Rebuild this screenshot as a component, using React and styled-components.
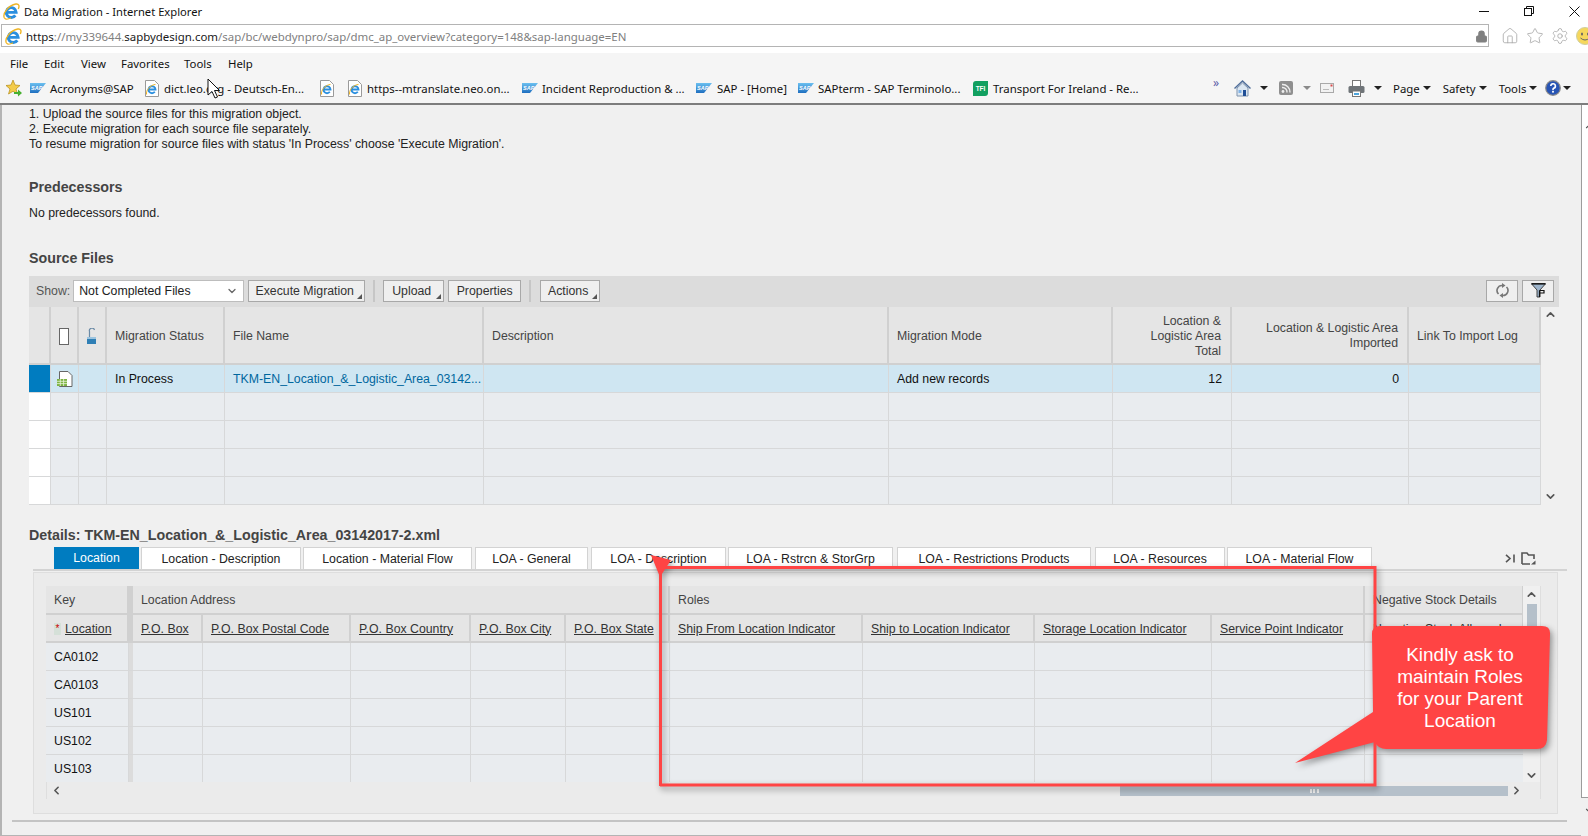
import React from 'react';
import styled, { createGlobalStyle } from 'styled-components';
import { Home, Star, Settings, Lock, ChevronUp, ChevronDown, ChevronLeft, ChevronRight } from 'lucide-react';

const GlobalStyle = createGlobalStyle`
  html, body {
    margin: 0;
    padding: 0;
    background: #fff;
    overflow: hidden;
  }
  * {
    box-sizing: border-box;
  }
`;

const Page = styled.div`
  position: relative;
  width: 1588px;
  height: 836px;
  overflow: hidden;
  background: #fff;
  font-family: "Liberation Sans", Arial, sans-serif;
  font-size: 12.3px;
  color: #333;
`;

/* ---------- browser chrome ---------- */

const TitleBar = styled.div`
  display: flex;
  align-items: center;
  height: 24px;
  padding: 0 0 2px 3px;
  font-family: "Noto Sans", sans-serif;
  font-size: 11.2px;
  color: #111;
  gap: 4px;
`;

const WindowControls = styled.div`
  margin-left: auto;
  display: flex;
  align-items: center;
  gap: 35px;
  padding-right: 8px;
`;

const AddressRow = styled.div`
  display: flex;
  align-items: center;
  width: 1588px;
  height: 23px;
`;

const AddressBox = styled.div`
  display: flex;
  align-items: center;
  flex: none;
  width: 1488px;
  height: 23px;
  margin-left: 1px;
  padding: 1px 0 0 3px;
  gap: 4px;
  border: 1px solid #b4b4b4;
  font-family: "Noto Sans", sans-serif;
  font-size: 11.45px;
  color: #808080;
  white-space: nowrap;
`;

const UrlDark = styled.span`
  color: #1a1a1a;
`;

const AddressIcons = styled.div`
  display: flex;
  align-items: center;
  flex: none;
  gap: 7px;
  margin-left: 12px;
  color: #a8a8a8;
`;

const ToolbarArea = styled.div`
  height: 52px;
  margin-top: 6px;
  background: #f5f5f5;
  border-bottom: 2px solid #7d7d7d;
  font-family: "Noto Sans", sans-serif;
  font-size: 11.4px;
  color: #111;
`;

const MenuRow = styled.div`
  display: flex;
  align-items: center;
  height: 21px;
`;

const MenuItem = styled.span`
  position: relative;
  width: ${p => p.$w}px;
  flex: none;
`;

const FavRow = styled.div`
  display: flex;
  align-items: center;
  height: 28px;
  padding-left: 5px;
  white-space: nowrap;
`;

const FavGap = styled.span`
  flex: none;
  width: ${p => p.$w}px;
`;

const FavText = styled.span`
  flex: none;
  width: ${p => p.$w}px;
`;

const Overflow = styled.span`
  flex: none;
  width: 21px;
  margin-top: -11px;
  color: #5c5ca8;
  font-size: 12px;
`;

const DropCaret = styled.span`
  flex: none;
  width: 0;
  height: 0;
  border-left: 4px solid transparent;
  border-right: 4px solid transparent;
  border-top: 4px solid ${p => p.$grey ? '#8a8a8a' : '#222'};
`;

/* ---------- page content ---------- */

const Main = styled.div`
  display: flex;
  height: 731px;
`;

const Content = styled.div`
  flex: none;
  width: 1581px;
  height: 731px;
  border-left: 2px solid #b4b4b4;
  border-bottom: 1px solid #b4b4b4;
  background: #f0f0f0;
  padding-top: 2px;
`;

const SideScroll = styled.div`
  flex: 1;
  display: flex;
  flex-direction: column;
  background: #f0f0f0;
  color: #555;
  overflow: hidden;
`;

const SideTrack = styled.div`
  height: 693px;
  padding: 14px 0 0 1px;
  background: #fff;
  border-left: 1px solid #9c9c9c;
  border-bottom: 1px solid #9c9c9c;
`;

const SideFoot = styled.div`
  padding: 6px 0 0 2px;
`;

const Indented = styled.div`
  margin-left: 27px;
`;

const InfoLine = styled.div`
  line-height: 15px;
  color: #222;
`;

const SectionTitle = styled.div`
  margin-top: ${p => p.$top}px;
  line-height: 20px;
  font-size: 14.25px;
  font-weight: bold;
  color: #444;
`;

const Toolbar = styled.div`
  display: flex;
  align-items: center;
  width: 1530px;
  height: 31px;
  margin-top: 8px;
  padding: 0 5px 2px 7px;
  background: #dcdcdc;
`;

const ShowLabel = styled.span`
  color: #555;
  margin-right: 3px;
`;

const SelectBox = styled.div`
  display: flex;
  align-items: center;
  justify-content: space-between;
  width: 171px;
  height: 22px;
  padding: 0 5px 0 5px;
  margin-right: 4px;
  background: #fff;
  border: 1px solid #bdbdbd;
  color: #222;
`;

const ToolButton = styled.div`
  position: relative;
  display: flex;
  align-items: center;
  justify-content: center;
  flex: none;
  width: ${p => p.$w}px;
  height: 22px;
  margin-left: ${p => p.$left || 0}px;
  background: #efefef;
  border: 1px solid #a8a8a8;
  color: #333;
  ${p => p.$menu && `
    padding-right: 4px;
    &::after {
      content: '';
      position: absolute;
      right: 2px;
      bottom: 2px;
      border-left: 5px solid transparent;
      border-bottom: 5px solid #555;
    }
  `}
`;

const ToolSep = styled.span`
  flex: none;
  width: 2px;
  height: 22px;
  margin-left: 8px;
  margin-right: 2px;
  background: #c6c6c6;
`;

const ToolSpacer = styled.span`
  flex: 1;
`;

const TableWrap = styled.div`
  display: flex;
  width: 1530px;
`;

const ScrollColumn = styled.div`
  flex: none;
  width: ${p => p.$w}px;
  display: flex;
  flex-direction: column;
  align-items: center;
  justify-content: space-between;
  padding: ${p => p.$pad};
  color: #555;
  background: #f0f0f0;
`;

const Grid = styled.div`
  display: grid;
  grid-template-columns: ${p => p.$cols};
`;

const Cell = styled.div`
  display: flex;
  align-items: center;
  min-width: 0;
  height: ${p => p.$h || 28}px;
  padding: ${p => p.$center ? '0' : p.$right ? '0 9px 0 8px' : '0 8px'};
  justify-content: ${p => p.$right ? 'flex-end' : p.$center ? 'center' : 'flex-start'};
  text-align: ${p => p.$right ? 'right' : 'left'};
  background: ${p => p.$bg || '#e9ecef'};
  border-right: 1px solid #d7d8d9;
  border-bottom: 1px solid #d7d8d9;
  color: ${p => p.$color || '#111'};
  white-space: nowrap;
  overflow: hidden;
`;

const HeadCell = styled(Cell)`
  padding-top: 2px;
  background: ${p => p.$bg || '#e5e5e5'};
  border-right: 2px solid #d0d0d0;
  border-bottom: 2px solid #d0d0d0;
  color: #444;
  line-height: 15px;
`;

const SpanHead = styled(HeadCell)`
  grid-column: ${p => p.$span};
`;

const FileLink = styled(Cell)`
  padding-right: 0;
`;

const CheckBox = styled.span`
  width: 10px;
  height: 17px;
  background: #fff;
  border: 1px solid #666;
`;

const TabBar = styled.div`
  display: flex;
  align-items: stretch;
  height: 24px;
  margin: 2px 0 0 31px;
  width: 1534px;
  padding-left: 21px;
  border-bottom: 2px solid #d3d3d3;
`;

const Tab = styled.div`
  display: flex;
  align-items: center;
  justify-content: center;
  flex: none;
  width: ${p => p.$w}px;
  margin-right: ${p => p.$gap}px;
  background: ${p => p.$active ? '#007cc0' : '#fff'};
  border: ${p => p.$active ? 'none' : '1px solid #d3d3d3'};
  border-bottom: none;
  color: ${p => p.$active ? '#fff' : '#222'};
`;

const TabTools = styled.div`
  margin-left: auto;
  display: flex;
  align-items: center;
  gap: 5px;
  padding-right: 31px;
  color: #555;
`;

const DetailPanel = styled.div`
  width: 1525px;
  height: 242px;
  margin: 1px 0 0 31px;
  padding: 13px 0 0 12px;
  background: #ebebeb;
  border: 1px solid #dedede;
`;

const DetailTable = styled.div`
  width: 1495px;
  height: 213px;
  border: 1px solid #dedede;
  border-width: 0 1px 1px 0;
`;

const DetailBody = styled.div`
  display: flex;
  height: 196px;
`;

const DetailScroll = styled.div`
  width: 1478px;
  overflow: hidden;
`;

const ThumbV = styled.div`
  width: 10px;
  flex: 1;
  margin: 3px 0;
  background: linear-gradient(#b5c0ca 0 60px, transparent 60px);
`;

const UnderHead = styled.span`
  text-decoration: underline;
  color: #333;
`;

const Required = styled.span`
  display: inline-flex;
  align-items: center;
  justify-content: center;
  width: 7px;
  height: 12px;
  margin-right: 4px;
  background: #d5e0d8;
  color: #c00;
  font-size: 10px;
  line-height: 12px;
`;

const HScroll = styled.div`
  display: flex;
  align-items: center;
  height: 17px;
  padding: 0 17px 0 3px;
  color: #555;
  background: #ebebeb;
  border-left: 1px solid #dedede;
`;

const HTrack = styled.div`
  flex: 1;
  display: flex;
  justify-content: flex-end;
  padding: 0 2px 0 0;
`;

const HThumb = styled.div`
  display: flex;
  align-items: center;
  justify-content: center;
  width: 388px;
  height: 10px;
  background: #b5c0ca;
`;

const Grip = styled.span`
  width: 9px;
  height: 4px;
  background: repeating-linear-gradient(90deg, #f0f0f0 0 2px, transparent 2px 3.5px);
`;

const BottomLine = styled.div`
  width: 1555px;
  height: 2px;
  margin: 6px 0 0 10px;
  background: #c4c4c4;
`;

/* ---------- annotation layer ---------- */

const Overlay = styled.svg`
  position: absolute;
  left: 0;
  top: 0;
  pointer-events: none;
  filter: drop-shadow(2px 3px 3px rgba(0, 0, 0, 0.4));
`;

const CalloutText = styled.div`
  position: absolute;
  left: 1372px;
  top: 644px;
  width: 176px;
  font-size: 19px;
  line-height: 22px;
  text-align: center;
  color: #fff;
`;

const Cursor = styled.svg`
  position: absolute;
  left: 207px;
  top: 78px;
`;

/* ---------- small drawings ---------- */

const IeIcon = ({ size = 17 }) => (
  <svg width={size} height={size} viewBox="0 0 20 20" style={{ flex: 'none' }}>
    <path d="M5.5 11 H15.5 A5.8 5.8 0 1 0 14.5 14.5" fill="none" stroke="#2b8fdf" strokeWidth="3.4" />
    <path d="M1.6 17.5 C-1 12 7 2.5 15 1.2 C19 .6 19.6 3.4 18 7" fill="none" stroke="#eeb424" strokeWidth="1.6" />
    <path d="M1.6 17.5 C3 19.6 6.5 19 9.5 17.4" fill="none" stroke="#eeb424" strokeWidth="1.2" />
  </svg>
);

const SapIcon = () => (
  <svg width="16" height="10" viewBox="0 0 16 10" style={{ flex: 'none' }}>
    <defs>
      <linearGradient id="sapBlue" x1="0" y1="0" x2="0" y2="1">
        <stop offset="0" stopColor="#6cc0f0" />
        <stop offset="1" stopColor="#1f6fc0" />
      </linearGradient>
    </defs>
    <path d="M0 0 H16 L8 10 H0 Z" fill="url(#sapBlue)" />
    <text x="1" y="6.8" fontSize="5.5" fontWeight="bold" fontStyle="italic" fill="#fff" fontFamily="Liberation Sans">SAP</text>
  </svg>
);

const PageIe = () => (
  <svg width="14" height="17" viewBox="0 0 14 17" style={{ flex: 'none' }}>
    <path d="M.5.5 H9.5 L13.5 4.5 V16.5 H.5 Z" fill="#fff" stroke="#9a9a9a" />
    <path d="M3.5 9.5 H10.5 A3.5 3.5 0 1 0 9.8 11.8" fill="none" stroke="#2b8fdf" strokeWidth="1.9" />
    <path d="M1.6 14.5 C.6 10.5 5 5 10.5 4.4" fill="none" stroke="#eeb424" strokeWidth="1" />
  </svg>
);

const TfiIcon = () => (
  <svg width="15" height="15" viewBox="0 0 15 15" style={{ flex: 'none' }}>
    <path d="M3 0 H15 V12 Q15 15 12 15 H0 V3 Q0 0 3 0 Z" fill="#12a060" />
    <text x="7.5" y="10" textAnchor="middle" fontSize="6.5" fontWeight="bold" fill="#fff" fontFamily="Liberation Sans">TFI</text>
  </svg>
);

const FavStar = () => (
  <svg width="18" height="18" viewBox="0 0 18 18" style={{ flex: 'none' }}>
    <path d="M8 1 L10 6 L15 6.5 L11 10 L12.5 15 L8 12.3 L3.5 15 L5 10 L1 6.5 L6 6 Z" fill="#f3cb4a" stroke="#b58b14" strokeWidth=".7" />
    <path d="M9 13 H13 V10.5 L17 14 L13 17.5 V15 H9 Z" fill="#47b02f" />
  </svg>
);

const SmileyIcon = () => (
  <svg width="18" height="18" viewBox="0 0 18 18" style={{ flex: 'none' }}>
    <circle cx="9" cy="9" r="8.5" fill="#f6d75c" stroke="#cfcfa0" />
    <ellipse cx="6" cy="7" rx="1" ry="1.6" fill="#666" />
    <ellipse cx="12" cy="7" rx="1" ry="1.6" fill="#666" />
    <path d="M4.5 11 Q9 15 13.5 11" fill="none" stroke="#666" />
  </svg>
);

const WinMin = () => <svg width="10" height="10"><path d="M0 5.5 H10" stroke="#111" /></svg>;
const WinRestore = () => (
  <svg width="10" height="10" fill="none" stroke="#111">
    <rect x=".5" y="2.5" width="7" height="7" />
    <path d="M2.5 2.5 V.5 H9.5 V7.5 H7.5" />
  </svg>
);
const WinClose = () => <svg width="11" height="11"><path d="M.5 .5 L10.5 10.5 M10.5 .5 L.5 10.5" stroke="#111" /></svg>;

const HomeColor = () => (
  <svg width="17" height="17" viewBox="0 0 17 17" style={{ flex: 'none' }}>
    <path d="M3 8 V16 H14 V8 L8.5 3 Z" fill="#dce7f2" stroke="#7e93ad" />
    <path d="M.5 8.5 L8.5 1 L16.5 8.5" fill="none" stroke="#4f6d9a" strokeWidth="1.4" />
    <rect x="9" y="10" width="3" height="6" fill="#1f4e96" />
    <rect x="4.5" y="10" width="3" height="3" fill="#7fb2e5" />
  </svg>
);

const RssIcon = () => (
  <svg width="14" height="14" viewBox="0 0 14 14" style={{ flex: 'none' }}>
    <rect width="14" height="14" rx="2" fill="#8f8f8f" />
    <circle cx="4" cy="10.5" r="1.4" fill="#eee" />
    <path d="M3 6.5 A4.5 4.5 0 0 1 8 11.5 M3 3.5 A7.5 7.5 0 0 1 11 11.5" fill="none" stroke="#eee" strokeWidth="1.4" />
  </svg>
);

const MailIcon = () => (
  <svg width="14" height="10" viewBox="0 0 14 10" style={{ flex: 'none' }}>
    <rect x=".5" y=".5" width="13" height="9" fill="#f2f2f2" stroke="#a9a9a9" />
    <rect x="10.5" y="1.5" width="2" height="2" fill="#d84a4a" />
    <path d="M3 6.5 H9" stroke="#bbb" />
  </svg>
);

const PrintIcon = () => (
  <svg width="17" height="17" viewBox="0 0 17 17" style={{ flex: 'none' }}>
    <rect x="4.5" y=".5" width="8" height="6" fill="#fff" stroke="#777" />
    <rect x=".5" y="6" width="16" height="7" rx="1.5" fill="#6f7478" />
    <rect x="4.5" y="11" width="8" height="5.5" fill="#fff" stroke="#777" />
    <rect x="6" y="13" width="5" height="2" fill="#4ea5dc" />
  </svg>
);

const HelpIcon = () => (
  <svg width="16" height="16" viewBox="0 0 16 16" style={{ flex: 'none' }}>
    <circle cx="8" cy="8" r="7.3" fill="#2754b4" stroke="#8b8b8b" strokeWidth="1.2" />
    <path d="M5.8 6 A2.3 2.3 0 1 1 8.6 8.3 Q8 8.6 8 10" fill="none" stroke="#fff" strokeWidth="1.6" />
    <rect x="7.1" y="10.8" width="1.8" height="1.8" fill="#fff" />
  </svg>
);

const LockOpen = () => (
  <svg width="10" height="17" viewBox="0 0 10 17" style={{ flex: 'none' }}>
    <path d="M2.5 9 V3.5 A2.5 2.5 0 0 1 7.5 2" fill="none" stroke="#6b8aa6" strokeWidth="1.2" />
    <rect x="0" y="9" width="9" height="7" fill="#2f7fb5" />
    <rect x="0" y="9" width="9" height="2" fill="#9cc4df" />
  </svg>
);

const FileIcon = () => (
  <svg width="16" height="16" viewBox="0 0 16 16" style={{ flex: 'none' }}>
    <path d="M2.5.5 H11 L15 4.5 V15.5 H2.5 Z" fill="#fff" stroke="#666" />
    <rect x="0" y="8" width="10" height="7" fill="#7cb342" />
    <path d="M0 10.3 H10 M0 12.6 H10 M3.3 8 V15 M6.6 8 V15" stroke="#e8f3da" strokeWidth=".8" />
  </svg>
);

const RefreshIcon = () => (
  <svg width="13" height="15" viewBox="0 0 13 15" style={{ flex: 'none' }}>
    <path d="M2.5 11 A5 5 0 0 1 6.5 2.5" fill="none" stroke="#777" strokeWidth="1.6" />
    <path d="M6 0 L9.5 2.6 L6 5 Z" fill="#777" />
    <path d="M10.5 4 A5 5 0 0 1 6.5 12.5" fill="none" stroke="#777" strokeWidth="1.6" />
    <path d="M7 10 L3.5 12.4 L7 15 Z" fill="#777" />
  </svg>
);

const FilterIcon = () => (
  <svg width="15" height="15" viewBox="0 0 15 15" style={{ flex: 'none' }}>
    <path d="M.5.8 H14.5 L9 7 V14 H6 V7 Z" fill="#9db4cb" stroke="#333" strokeWidth=".9" />
    <path d="M.5.8 H14.5" stroke="#111" strokeWidth="1.4" />
    <path d="M8.5 7.5 H13 V10 H8.5 M8.5 14 V7.5" fill="none" stroke="#111" strokeWidth="1.2" />
  </svg>
);

const FolderTool = () => (
  <svg width="15" height="13" viewBox="0 0 15 13">
    <path d="M1 12 V1 H6 L7.5 3 H13 V7 M1 12 H9" fill="none" stroke="#555" strokeWidth="1.6" />
    <path d="M10 12.5 L14.5 12.5 L14.5 8.5 Z" fill="#555" />
  </svg>
);

const LastIcon = () => (
  <svg width="11" height="9" viewBox="0 0 11 9">
    <path d="M1 .8 L5 4.5 L1 8.2 M9 .5 V8.5" fill="none" stroke="#555" strokeWidth="1.6" />
  </svg>
);

/* ---------- data ---------- */

const MENU = [['File', 34], ['Edit', 37], ['View', 40], ['Favorites', 63], ['Tools', 44], ['Help', 40]];

const SOURCE_COLS = '22px 28px 28px 118px 259px 405px 224px 119px 177px 132px';
const DETAIL_COLS = '83px 4px 70px 148px 120px 95px 104px 193px 172px 177px 153px 159px';

const DETAIL_HEADS = [
  'P.O. Box',
  'P.O. Box Postal Code',
  'P.O. Box Country',
  'P.O. Box City',
  'P.O. Box State',
  'Ship From Location Indicator',
  'Ship to Location Indicator',
  'Storage Location Indicator',
  'Service Point Indicator',
  'Negative Stock Allowed'
];

const LOCATIONS = ['CA0102', 'CA0103', 'US101', 'US102', 'US103'];

const TABS = [
  ['Location', 85, 2, true],
  ['Location - Description', 160, 2],
  ['Location - Material Flow', 169, 3],
  ['LOA - General', 113, 3],
  ['LOA - Description', 135, 2],
  ['LOA - Rstrcn & StorGrp', 165, 4],
  ['LOA - Restrictions Products', 194, 4],
  ['LOA - Resources', 130, 2],
  ['LOA - Material Flow', 145, 0]
];

const App = () => (
  <Page>
    <GlobalStyle />

    <TitleBar>
      <IeIcon />
      Data Migration - Internet Explorer
      <WindowControls>
        <WinMin />
        <WinRestore />
        <WinClose />
      </WindowControls>
    </TitleBar>

    <AddressRow>
      <AddressBox>
        <IeIcon />
        <span>
          <UrlDark>https</UrlDark>://my339644.<UrlDark>sapbydesign.com</UrlDark>/sap/bc/webdynpro/sap/dmc_ap_overview?category=148&amp;sap-language=EN
        </span>
        <Lock size={13} fill="#808080" color="#808080" style={{ marginLeft: 'auto' }} />
      </AddressBox>
      <AddressIcons>
        <Home size={18} strokeWidth={1.1} />
        <Star size={18} strokeWidth={1.1} />
        <Settings size={18} strokeWidth={1.1} />
        <SmileyIcon />
      </AddressIcons>
    </AddressRow>

    <ToolbarArea>
      <MenuRow>
        <FavGap $w={10} />
        {MENU.map(([label, w]) => <MenuItem key={label} $w={w}>{label}</MenuItem>)}
      </MenuRow>
      <FavRow>
        <FavStar />
        <FavGap $w={7} />
        <SapIcon />
        <FavGap $w={4} />
        <FavText $w={95}>Acronyms@SAP</FavText>
        <PageIe />
        <FavGap $w={5} />
        <FavText $w={156}>dict.leo.org - Deutsch-En...</FavText>
        <PageIe />
        <FavGap $w={14} />
        <PageIe />
        <FavGap $w={5} />
        <FavText $w={155}>https--mtranslate.neo.on...</FavText>
        <SapIcon />
        <FavGap $w={4} />
        <FavText $w={154}>Incident Reproduction &amp; ...</FavText>
        <SapIcon />
        <FavGap $w={5} />
        <FavText $w={81}>SAP - [Home]</FavText>
        <SapIcon />
        <FavGap $w={4} />
        <FavText $w={155}>SAPterm - SAP Terminolo...</FavText>
        <TfiIcon />
        <FavGap $w={5} />
        <FavText $w={220}>Transport For Ireland - Re...</FavText>
        <Overflow>»</Overflow>
        <HomeColor />
        <FavGap $w={9} />
        <DropCaret />
        <FavGap $w={11} />
        <RssIcon />
        <FavGap $w={10} />
        <DropCaret $grey />
        <FavGap $w={9} />
        <MailIcon />
        <FavGap $w={14} />
        <PrintIcon />
        <FavGap $w={9} />
        <DropCaret />
        <FavGap $w={11} />
        Page
        <FavGap $w={3} />
        <DropCaret />
        <FavGap $w={12} />
        Safety
        <FavGap $w={3} />
        <DropCaret />
        <FavGap $w={12} />
        Tools
        <FavGap $w={3} />
        <DropCaret />
        <FavGap $w={8} />
        <HelpIcon />
        <FavGap $w={2} />
        <DropCaret />
      </FavRow>
    </ToolbarArea>

    <Main>
      <Content>
        <Indented>
          <InfoLine>1. Upload the source files for this migration object.</InfoLine>
          <InfoLine>2. Execute migration for each source file separately.</InfoLine>
          <InfoLine>To resume migration for source files with status 'In Process' choose 'Execute Migration'.</InfoLine>
          <SectionTitle $top={25}>Predecessors</SectionTitle>
          <InfoLine style={{ marginTop: 9 }}>No predecessors found.</InfoLine>
          <SectionTitle $top={27}>Source Files</SectionTitle>

          <Toolbar>
            <ShowLabel>Show:</ShowLabel>
            <SelectBox>Not Completed Files <ChevronDown size={12} strokeWidth={2.5} color="#666" /></SelectBox>
            <ToolButton $w={117} $menu>Execute Migration</ToolButton>
            <ToolSep />
            <ToolButton $w={61} $left={6} $menu>Upload</ToolButton>
            <ToolButton $w={73} $left={4}>Properties</ToolButton>
            <ToolSep />
            <ToolButton $w={60} $left={7} $menu>Actions</ToolButton>
            <ToolSpacer />
            <ToolButton $w={32}><RefreshIcon /></ToolButton>
            <ToolButton $w={32} $left={4}><FilterIcon /></ToolButton>
          </Toolbar>

          <TableWrap>
            <Grid $cols={SOURCE_COLS}>
              <HeadCell $h={58} />
              <HeadCell $h={58} $center><CheckBox /></HeadCell>
              <HeadCell $h={58} $center><LockOpen /></HeadCell>
              <HeadCell $h={58}>Migration Status</HeadCell>
              <HeadCell $h={58}>File Name</HeadCell>
              <HeadCell $h={58}>Description</HeadCell>
              <HeadCell $h={58}>Migration Mode</HeadCell>
              <HeadCell $h={58} $right>Location &amp;<br />Logistic Area<br />Total</HeadCell>
              <HeadCell $h={58} $right>Location &amp; Logistic Area<br />Imported</HeadCell>
              <HeadCell $h={58}>Link To Import Log</HeadCell>

              <Cell $bg="#007cc0" />
              <Cell $bg="#cfe6f2" $center><FileIcon /></Cell>
              <Cell $bg="#cfe6f2" />
              <Cell $bg="#cfe6f2">In Process</Cell>
              <FileLink $bg="#cfe6f2" $color="#00679e">TKM-EN_Location_&amp;_Logistic_Area_03142...</FileLink>
              <Cell $bg="#cfe6f2" />
              <Cell $bg="#cfe6f2">Add new records</Cell>
              <Cell $bg="#cfe6f2" $right>12</Cell>
              <Cell $bg="#cfe6f2" $right>0</Cell>
              <Cell $bg="#cfe6f2" />

              {[0, 1, 2, 3].map(row => (
                <React.Fragment key={row}>
                  <Cell $bg="#fff" />
                  {Array.from({ length: 9 }, (_, i) => <Cell key={i} />)}
                </React.Fragment>
              ))}
            </Grid>
            <ScrollColumn $w={18} $pad="1px 0 2px">
              <ChevronUp size={13} strokeWidth={3} />
              <ChevronDown size={13} strokeWidth={3} />
            </ScrollColumn>
          </TableWrap>

          <SectionTitle $top={20}>Details: TKM-EN_Location_&amp;_Logistic_Area_03142017-2.xml</SectionTitle>
        </Indented>

        <TabBar>
          {TABS.map(([label, w, gap, active]) => (
            <Tab key={label} $w={w} $gap={gap} $active={active}>{label}</Tab>
          ))}
          <TabTools>
            <LastIcon />
            <FolderTool />
          </TabTools>
        </TabBar>

        <DetailPanel>
          <DetailTable>
            <DetailBody>
              <DetailScroll>
                <Grid $cols={DETAIL_COLS}>
                  <HeadCell $h={29}>Key</HeadCell>
                  <HeadCell $h={29} $bg="#d0d0d0" />
                  <SpanHead $h={29} $span="3 / 8">Location Address</SpanHead>
                  <SpanHead $h={29} $span="8 / 12">Roles</SpanHead>
                  <HeadCell $h={29}>Negative Stock Details</HeadCell>

                  <HeadCell><Required>*</Required><UnderHead>Location</UnderHead></HeadCell>
                  <HeadCell $bg="#d0d0d0" />
                  {DETAIL_HEADS.map(label => (
                    <HeadCell key={label}><UnderHead>{label}</UnderHead></HeadCell>
                  ))}

                  {LOCATIONS.map(loc => (
                    <React.Fragment key={loc}>
                      <Cell>{loc}</Cell>
                      <Cell $bg="#dcdcdc" />
                      {DETAIL_HEADS.map(label => <Cell key={label} />)}
                    </React.Fragment>
                  ))}
                </Grid>
              </DetailScroll>
              <ScrollColumn $w={17} $pad="2px 0 0">
                <ChevronUp size={13} strokeWidth={3} />
                <ThumbV />
                <ChevronDown size={13} strokeWidth={3} />
              </ScrollColumn>
            </DetailBody>
            <HScroll>
              <ChevronLeft size={13} strokeWidth={3} />
              <HTrack>
                <HThumb><Grip /></HThumb>
              </HTrack>
              <ChevronRight size={13} strokeWidth={3} />
            </HScroll>
          </DetailTable>
        </DetailPanel>

        <BottomLine />
      </Content>
      <SideScroll>
        <SideTrack><ChevronUp size={14} strokeWidth={2} /></SideTrack>
        <SideFoot><ChevronDown size={14} strokeWidth={2} /></SideFoot>
      </SideScroll>
    </Main>

    {/* annotation drawn on top of the screenshot */}
    <Overlay width="1588" height="836">
      <path d="M660.5 786 V568 M660 567.5 H1375 V785 H660" fill="none" stroke="#ff4444" strokeWidth="3" />
      <path d="M651 555 L671 560 L660 577 Z" fill="#ff4444" />
      <path
        d="M1372 634 Q1372 626 1380 626 H1542 Q1551 626 1550 635 L1547 740 Q1546 749 1537 749 H1386 Q1378 749 1375 742 L1295 763 L1373 712 Z"
        fill="#ff4444"
      />
    </Overlay>
    <CalloutText>Kindly ask to<br />maintain Roles<br />for your Parent<br />Location</CalloutText>

    <Cursor width="14" height="22" viewBox="0 0 14 22">
      <path d="M1 1 V17 L5 13.5 L8 20 L10.5 19 L7.5 12.5 H12.5 Z" fill="#fff" stroke="#111" strokeWidth="1" />
    </Cursor>
  </Page>
);

export default App;
